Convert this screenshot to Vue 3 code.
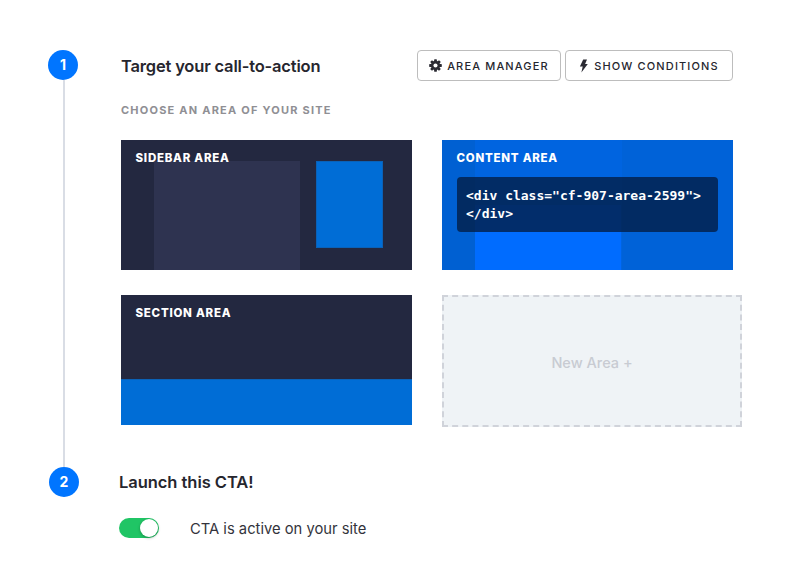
<template>
  <div class="page">
    <section class="step step-target">
      <div class="rail">
        <div class="num">1</div>
        <div class="rail-line"></div>
      </div>
      <div class="step-main">
        <div class="step-head">
          <h2>Target your call-to-action</h2>
          <div class="actions">
            <button class="btn btn-manager">
              <svg class="icon" width="13" height="13" viewBox="0 0 14 14">
                <g fill="#2b2b33">
                  <rect v-for="a in [0, 45, 90, 135]" :key="a" x="5.5" y="0.2" width="3" height="13.6" rx="0.5" :transform="`rotate(${a} 7 7)`" />
                </g>
                <circle cx="7" cy="7" r="5" fill="#2b2b33" />
                <circle cx="7" cy="7" r="2.2" fill="#fff" />
              </svg>
              AREA MANAGER
            </button>
            <button class="btn btn-conditions">
              <svg class="icon" width="9" height="14" viewBox="0 0 9 14">
                <path d="M4.2 0.4H8L6.1 4.9H8.8L2.4 13.6L3.7 7.4H0.9Z" fill="#2b2b33" />
              </svg>
              SHOW CONDITIONS
            </button>
          </div>
        </div>

        <div class="choose">CHOOSE AN AREA OF YOUR SITE</div>

        <div class="areas">
          <div class="area area-sidebar">
            <div class="sb-main"></div>
            <div class="sb-side"></div>
            <div class="area-name">SIDEBAR AREA</div>
          </div>
          <div class="area area-content">
            <div class="ct-main"></div>
            <div class="area-name">CONTENT AREA</div>
            <div class="code">&lt;div class="cf-907-area-2599"&gt;<br />&lt;/div&gt;</div>
          </div>
          <div class="area area-section">
            <div class="area-name">SECTION AREA</div>
            <div class="sec-band"></div>
          </div>
          <div class="area-new">New Area +</div>
        </div>
      </div>
    </section>

    <section class="step step-launch">
      <div class="rail">
        <div class="num">2</div>
      </div>
      <div class="launch-main">
        <h2>Launch this CTA!</h2>
        <div class="status">
          <div class="toggle"><span class="knob"></span></div>
          <span class="status-text">CTA is active on your site</span>
        </div>
      </div>
    </section>
  </div>
</template>

<script setup>
</script>

<style>
body {
  background: #fff;
}
</style>

<style scoped>
.page {
  width: 797px;
  height: 583px;
  padding: 50px 0 0 48px;
  box-sizing: border-box;
  font-family: Inter, "Liberation Sans", sans-serif;
  color: #26262e;
  overflow: hidden;
}

.step {
  display: flex;
}

.rail {
  width: 30px;
  flex: none;
  display: flex;
  flex-direction: column;
  align-items: center;
}

.num {
  width: 30px;
  height: 30px;
  border-radius: 50%;
  background: #0075ff;
  color: #fff;
  font-size: 14px;
  font-weight: 700;
  line-height: 30px;
  text-align: center;
}

.rail-line {
  flex: 1;
  width: 2px;
  margin-left: 2px;
  background: #d9dde5;
}

.step-target {
  height: 417px;
}

.step-main {
  margin-left: 43px;
  width: 612px;
}

.step-head {
  display: flex;
  justify-content: space-between;
  align-items: center;
  height: 31px;
}

h2 {
  margin: 0;
  font-size: 16.5px;
  font-weight: 600;
  letter-spacing: -0.18px;
  color: #26262e;
}

.actions {
  display: flex;
  gap: 4px;
}

.btn {
  display: flex;
  align-items: center;
  justify-content: center;
  gap: 5px;
  height: 31px;
  padding: 0;
  background: #fff;
  border: 1px solid #bdbdbd;
  border-radius: 4px;
  font-family: inherit;
  font-size: 11px;
  font-weight: 500;
  letter-spacing: 1.15px;
  color: #26262e;
}

.btn-manager {
  width: 144px;
}

.btn-conditions {
  width: 168px;
  gap: 6px;
}

.icon {
  flex: none;
}

.choose {
  margin-top: 22px;
  font-size: 11px;
  font-weight: 700;
  line-height: 14px;
  letter-spacing: 1.22px;
  color: #8f8f94;
}

.areas {
  margin-top: 23px;
  display: grid;
  grid-template-columns: 291px 291px;
  column-gap: 30px;
  row-gap: 25px;
  align-items: start;
}

.area {
  position: relative;
  height: 130px;
  overflow: hidden;
  background: #232840;
}

.area-name {
  position: relative;
  padding: 12px 0 0 14.5px;
  font-size: 11.5px;
  font-weight: 800;
  line-height: 13px;
  letter-spacing: 0.75px;
  color: #fff;
}

.sb-main {
  position: absolute;
  left: 33px;
  top: 21px;
  width: 146px;
  bottom: 0;
  background: #2e3350;
}

.sb-side {
  position: absolute;
  left: 195px;
  top: 21px;
  width: 67px;
  height: 87px;
  box-sizing: border-box;
  background: #006dd6;
  border: 1px solid #0a62b8;
}

.area-content {
  background: linear-gradient(90deg, #0060d2 33px, #0064e0 33px, #0064e0 180px, #0062d8 180px);
}

.ct-main {
  position: absolute;
  left: 33px;
  top: 65px;
  width: 146px;
  bottom: 0;
  background: #006cff;
}

.code {
  position: relative;
  margin: 12px 0 0 15px;
  width: 261px;
  height: 55px;
  box-sizing: border-box;
  padding: 10px 0 0 9px;
  border-radius: 4px;
  background: rgba(2, 30, 70, 0.8);
  font-family: "DejaVu Sans Mono", "Liberation Mono", monospace;
  font-size: 13px;
  font-weight: 700;
  line-height: 18px;
  color: #fff;
  white-space: nowrap;
}

.sec-band {
  position: absolute;
  left: 0;
  right: 0;
  bottom: 0;
  height: 45px;
  background: #006dd6;
  border-top: 1px solid #0a62b8;
}

.area-new {
  width: 300px;
  height: 132px;
  box-sizing: border-box;
  padding-top: 2px;
  display: flex;
  align-items: center;
  justify-content: center;
  background: #eff3f6;
  border: 2px dashed #d0d3da;
  font-size: 14.5px;
  font-weight: 500;
  color: #c8cbd2;
}

.step-launch {
  margin-left: 1px;
}

.launch-main {
  margin-left: 40px;
}

.launch-main h2 {
  line-height: 30px;
  letter-spacing: -0.05px;
}

.status {
  margin-top: 21px;
  display: flex;
  align-items: center;
  gap: 31px;
}

.toggle {
  position: relative;
  width: 40px;
  height: 20px;
  border-radius: 10px;
  background: #20c565;
}

.knob {
  position: absolute;
  right: 1px;
  top: 1px;
  width: 18px;
  height: 18px;
  border-radius: 50%;
  background: #fff;
  box-shadow: 0 1px 3px rgba(0, 0, 0, 0.3);
}

.status-text {
  padding-top: 2px;
  font-size: 14.75px;
  color: #33333b;
}
</style>
